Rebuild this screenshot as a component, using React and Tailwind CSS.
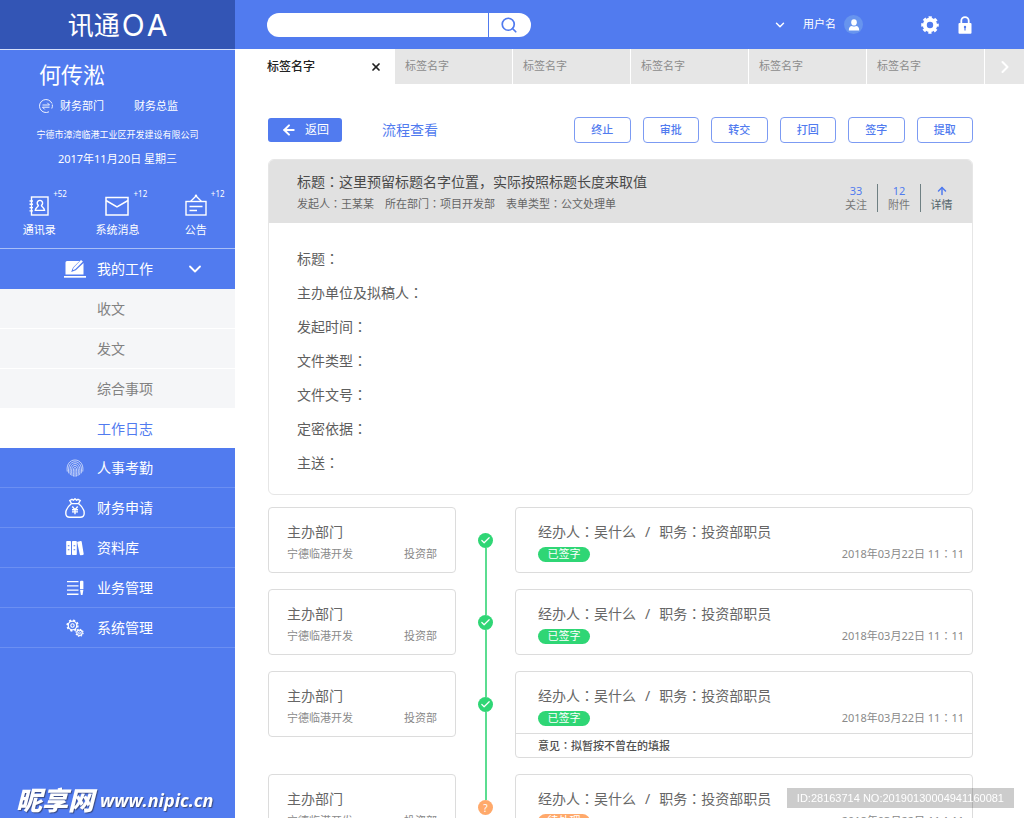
import React from "react";
import { Search, ChevronDown, ChevronRight, ArrowLeft, ArrowUp, X, Check } from "lucide-react";

const shortcuts = [
  { label: "通讯录", count: "+52", Icon: ContactsIcon },
  { label: "系统消息", count: "+12", Icon: MailIcon },
  { label: "公告", count: "+12", Icon: NoticeIcon },
];

const subItems = ["收文", "发文", "综合事项", "工作日志"];

const modules = [
  { label: "人事考勤", Icon: FingerprintIcon },
  { label: "财务申请", Icon: MoneyBagIcon },
  { label: "资料库", Icon: BooksIcon },
  { label: "业务管理", Icon: ListPenIcon },
  { label: "系统管理", Icon: GearsIcon },
];

const actions = ["终止", "审批", "转交", "打回", "签字", "提取"];
const tabs = [1, 2, 3, 4, 5];
const fields = ["标题", "主办单位及拟稿人", "发起时间", "文件类型", "文件文号", "定密依据", "主送"];

const steps = [
  { id: 1, done: true },
  { id: 2, done: true },
  { id: 3, done: true, note: "拟暂按不曾在的填报" },
  { id: 4, done: false },
];

function Colon() {
  return (
    <span lang="zh-TW" className="font-['Noto_Sans_CJK_TC',sans-serif] leading-none">
      ：
    </span>
  );
}

function ContactsIcon() {
  return (
    <svg viewBox="0 0 20 20" className="h-5 w-5" fill="none" stroke="currentColor" strokeWidth="1.4">
      <rect x="2.5" y="1" width="16.5" height="18" />
      <path d="M0.5 5h3.5M0.5 8.3h3.5M0.5 11.6h3.5M0.5 14.9h3.5" />
      <path d="M9.300 9.400a2.700 2.800 0 1 1 3.200 0c0 1.600 2.700 1.700 3 5H6.300c.3-3.300 3-3.400 3-5z" />
    </svg>
  );
}

function MailIcon() {
  return (
    <svg viewBox="0 0 24 20" className="h-5 w-6" fill="none" stroke="currentColor" strokeWidth="1.5">
      <rect x="1" y="1.500" width="22" height="17.500" />
      <path d="M1 4.500l11 6.500L23 4.500" />
    </svg>
  );
}

function NoticeIcon() {
  return (
    <svg viewBox="0 0 22 22" className="h-[22px] w-[22px]" fill="none" stroke="currentColor" strokeWidth="1.4">
      <rect x="1" y="7.500" width="20" height="13.500" />
      <path d="M5.500 7.500L11 2l5.500 5.500M4.500 12.500h13M4.500 16.500h7.500" />
      <circle cx="11" cy="1.800" r="1.200" fill="currentColor" stroke="none" />
    </svg>
  );
}

function LaptopIcon() {
  return (
    <svg viewBox="0 0 22 18" className="h-[18px] w-[22px]" fill="currentColor">
      <path d="M3 1h12.500L9 7.500 7.200 12l4.600-1.700L19.500 3v11.500h-18V2.500Q1.500 1 3 1z" />
      <path d="M17 0l1.900 1.600-7.700 7.700-2.400.9.700-2.400z" />
      <rect x="0" y="16" width="22" height="1.700" />
    </svg>
  );
}

function FingerprintIcon() {
  return (
    <svg viewBox="0 0 18 18" className="size-[18px] opacity-80" fill="none" stroke="currentColor" strokeWidth="0.800" strokeLinecap="round">
      <path d="M1.200 12.200C.2 6 3.500 1 9 1s8.800 5 7.800 11.200" />
      <path d="M2.700 14C1.600 8 4 2.800 9 2.800s7.400 5.200 6.300 11.200" />
      <path d="M4.400 15.500C3.200 9.500 5 4.600 9 4.600s5.800 4.900 4.600 10.900" />
      <path d="M6 16.500c-1-5.500-.2-10 3-10s4 4.500 3 10" />
      <path d="M7.600 17.200c-.6-5-.4-8.800 1.400-8.800s2 3.800 1.400 8.800M9 10.500v6.800" />
    </svg>
  );
}

function MoneyBagIcon() {
  return (
    <svg viewBox="0 0 20 20" className="size-5" fill="none" stroke="currentColor" strokeWidth="1.400">
      <path d="M6.500 5.500C4 7.500.8 11 .8 15.200c0 2.600 1.500 4 4 4h10.400c2.500 0 4-1.400 4-4 0-4.200-3.200-7.700-5.700-9.700" />
      <path d="M6.200 5.600h7.600M6.500 5.500L4.800 2.500 7 1.300l1.500.8L10 .8l1.500 1.300 1.500-.8 2.200 1.200-1.700 3" />
      <path d="M7.300 8.500l2.700 3.200 2.700-3.200M7 11.800h6M7 13.900h6M10 11.700v4.600" />
    </svg>
  );
}

function BooksIcon() {
  return (
    <svg viewBox="0 0 18 16" className="h-4 w-[18px]" fill="currentColor">
      <path fillRule="evenodd" d="M1 1h3.200q.8 0 .8.800v12.400q0 .8-.8.800H1q-.8 0-.8-.8V1.800Q.200 1 1 1zm.8 4.300v1h1.600v-1zm0 4v1h1.600v-1z" />
      <path fillRule="evenodd" d="M6.800 1H10q.8 0 .8.800v12.400q0 .8-.8.800H6.800q-.8 0-.8-.8V1.800q0-.8.800-.8zm.8 4.300v1h1.600v-1zm0 4v1h1.600v-1z" />
      <path d="M11.700 1.800l3.100-.7q.8-.100.900.7l2 12.200q.100.800-.7.900l-2.300.3q-.8.100-.9-.7L11.200 2.600q0-.700.5-.8z" />
    </svg>
  );
}

function ListPenIcon() {
  return (
    <svg viewBox="0 0 18 16" className="h-4 w-[18px]" fill="currentColor">
      <path d="M1 1h11.500v1.300H1zM1 5.200h11.500v1.300H1zM1 9.400h11.500v1.300H1zM1 13.600h11.500v1.300H1z" />
      <path d="M14 1.800q0-1 1-1h1.400q1 0 1 1V9H14zM14 9.800h3.400L16.500 14.900h-1.600z" />
    </svg>
  );
}

function GearsIcon() {
  return (
    <svg viewBox="0 0 18 18" className="size-[18px]" fill="none" stroke="currentColor">
      <circle cx="6.500" cy="6.500" r="4.300" strokeWidth="1.300" />
      <circle cx="6.500" cy="6.500" r="5.400" strokeWidth="1.500" strokeDasharray="2.100 2.140" />
      <circle cx="6.500" cy="6.500" r="1.700" strokeWidth="1.100" />
      <circle cx="13.500" cy="13.800" r="2.700" strokeWidth="1.100" />
      <circle cx="13.500" cy="13.800" r="3.600" strokeWidth="1.200" strokeDasharray="1.400 1.430" />
      <circle cx="13.500" cy="13.800" r="1" strokeWidth="0.900" />
    </svg>
  );
}

function SettingsIcon() {
  return (
    <svg viewBox="0 0 18 18" className="size-[18px]" fill="none" stroke="currentColor">
      <circle cx="9" cy="9" r="5.200" strokeWidth="4" />
      <circle cx="9" cy="9" r="7.700" strokeWidth="2.200" strokeDasharray="3.300 2.747" strokeDashoffset="1.650" />
    </svg>
  );
}

function SwapIcon() {
  return (
    <svg viewBox="0 0 14 14" className="size-3.5" fill="none" stroke="currentColor" strokeWidth="0.900">
      <path d="M13 4.500A6.500 6.500 0 1 0 10 12.800M13.300 5.500a6.500 6.500 0 0 1-.5 4" />
      <path d="M3.500 6h7L8.300 3.800M10.500 8.200h-7l2.200 2.200" />
    </svg>
  );
}

function Header() {
  return (
    <header className="flex h-[49px] shrink-0 bg-[#517bef] text-white">
      <h1 className="flex w-[235px] shrink-0 items-center justify-center gap-0.5 bg-[#3355b5]">
        <span className="text-[26px] leading-6">讯通</span>
        <span className="flex gap-0.5 font-['Inter',sans-serif] text-[30px] leading-6 font-normal">
          <span>O</span>
          <span>A</span>
        </span>
      </h1>
      <div className="flex flex-1 items-center pr-[52px] pl-8">
        <form role="search" className="flex h-6 w-[264px] overflow-hidden rounded-full bg-white" onSubmit={(e) => e.preventDefault()}>
          <input type="search" aria-label="搜索" className="min-w-0 flex-1 px-4 text-xs text-gray-700 outline-none" />
          <button type="submit" aria-label="搜索" className="flex w-[43px] items-center justify-center border-l border-[#517bef] pr-0.5 text-[#517bef]">
            <Search className="size-[18px]" strokeWidth={2.3} />
          </button>
        </form>
        <button type="button" className="ml-auto flex items-center text-[11px]">
          <ChevronDown className="mr-4 size-3.5" strokeWidth={2.5} />
          用户名
          <span className="ml-2 flex size-[19px] items-center justify-center rounded-full bg-[#6794ee]">
            <svg viewBox="0 0 12 12" className="size-3" fill="currentColor">
              <ellipse cx="6" cy="3.400" rx="2.800" ry="3.100" />
              <path d="M.800 11.500Q.800 7.200 4 7q2 1.200 4 0 3.200.2 3.200 4.500z" />
            </svg>
          </span>
        </button>
        <button type="button" aria-label="设置" className="ml-[58px]">
          <SettingsIcon />
        </button>
        <button type="button" aria-label="锁定" className="ml-[19px]">
          <svg viewBox="0 0 14 18" className="h-[18px] w-3.5" fill="none">
            <path d="M3.300 8V4.800a3.700 3.700 0 0 1 7.400 0V8" stroke="currentColor" strokeWidth="1.800" />
            <rect x="0.500" y="7" width="13" height="10.800" rx="1" fill="currentColor" />
            <circle cx="7" cy="11" r="1.200" fill="#517bef" />
            <path d="M7 11v3.500" stroke="#517bef" strokeWidth="1.200" />
          </svg>
        </button>
      </div>
    </header>
  );
}

function Sidebar() {
  return (
    <aside className="flex w-[235px] shrink-0 flex-col border-t border-[#d5dffb] bg-[#517bef] text-white">
      <section className="flex h-[199px] shrink-0 flex-col border-b border-[#a9bff7]">
        <h2 className="pt-2 pl-[39px] text-[22px] leading-8">何传淞</h2>
        <p className="flex items-center pt-1.5 pl-[39px] text-[11px] leading-5">
          <SwapIcon />
          <span className="ml-[7px]">财务部门</span>
          <span className="ml-[30px]">财务总监</span>
        </p>
        <p className="pt-[9px] text-center text-[9px] leading-5">宁德市漳湾临港工业区开发建设有限公司</p>
        <p className="pt-1 text-center text-[11px] leading-5">2017年11月20日 星期三</p>
        <ul className="mt-[21px] grid grid-cols-3">
          {shortcuts.map(({ label, count, Icon }) => (
            <li key={label}>
              <a href="#" className="flex flex-col items-center text-[11px] leading-5">
                <span className="relative flex h-7 items-end pb-0.5">
                  <Icon />
                  <span className="absolute -top-1 left-full pl-1 text-[8px] leading-4">{count}</span>
                </span>
                <span className="pt-0.5">{label}</span>
              </a>
            </li>
          ))}
        </ul>
      </section>
      <nav className="text-sm">
        <button type="button" className="flex h-10 w-full items-center border-b border-[#517bef] pl-16">
          <LaptopIcon />
          <span className="ml-[11px]">我的工作</span>
          <ChevronDown className="ml-8 size-5" strokeWidth={2.2} />
        </button>
        <ul>
          {subItems.map((label) => (
            <li key={label}>
              <a
                href="#"
                className={
                  label === "工作日志"
                    ? "flex h-[39px] items-center bg-white pl-[97px] text-[#517bef]"
                    : "flex h-10 items-center border-b border-white bg-[#f5f6f8] pl-[97px] text-[#828282]"
                }
              >
                {label}
              </a>
            </li>
          ))}
        </ul>
        <ul>
          {modules.map(({ label, Icon }) => (
            <li key={label}>
              <a href="#" className="flex h-10 items-center border-b border-[#6b8ff2] pl-16">
                <span className="flex w-[22px] justify-center">
                  <Icon />
                </span>
                <span className="ml-[11px]">{label}</span>
              </a>
            </li>
          ))}
        </ul>
      </nav>
    </aside>
  );
}

function TabBar() {
  return (
    <div className="flex h-[35px] shrink-0">
      <div className="flex w-40 shrink-0 items-center justify-between pr-[13px] pl-8 text-xs font-medium text-[#222222]">
        <a href="#">标签名字</a>
        <button type="button" aria-label="关闭标签">
          <X className="size-3" strokeWidth={3.5} />
        </button>
      </div>
      <div className="flex flex-1 bg-[#e6e6e6] text-[11px] text-[#8c8c8c]">
        {tabs.map((n) => (
          <a key={n} href="#" className="flex w-[118px] items-center border-r border-white pl-2.5">
            标签名字
          </a>
        ))}
        <button type="button" aria-label="更多标签" className="flex flex-1 items-center justify-center text-white">
          <ChevronRight className="size-5" strokeWidth={2.5} />
        </button>
      </div>
    </div>
  );
}

function Toolbar() {
  return (
    <div className="flex h-[26px] items-center">
      <button type="button" className="flex h-6 w-[74px] items-center justify-center gap-2 rounded-[3px] bg-[#517bef] text-xs text-white">
        <ArrowLeft className="size-4" strokeWidth={3} />
        返回
      </button>
      <h2 className="ml-10 text-sm text-[#517bef]">流程查看</h2>
      <div className="ml-auto grid w-[399px] grid-cols-6 gap-3">
        {actions.map((label) => (
          <button key={label} type="button" className="h-[26px] rounded border border-[#7c9bf3] text-[11px] font-medium text-[#517bef]">
            {label}
          </button>
        ))}
      </div>
    </div>
  );
}

function Document() {
  return (
    <section className="mt-4 overflow-hidden rounded-md border border-[#e6e6e6]">
      <header className="flex h-[63px] items-center bg-[#e1e1e1] pr-2.5 pl-7">
        <div>
          <h3 className="text-sm leading-6 text-[#4a4a4a]">
            标题<Colon />这里预留标题名字位置，实际按照标题长度来取值
          </h3>
          <p className="flex gap-[11px] text-[11px] leading-5 text-[#666666]">
            <span>发起人<Colon />王某某</span>
            <span>所在部门<Colon />项目开发部</span>
            <span>表单类型<Colon />公文处理单</span>
          </p>
        </div>
        <div className="ml-auto flex divide-x divide-[#6f8083] pt-3 text-center text-[11px] leading-3.5 text-[#777777]">
          <a href="#" className="w-[43px]">
            <span className="block text-[#517bef]">33</span>关注
          </a>
          <a href="#" className="w-[43px]">
            <span className="block text-[#517bef]">12</span>附件
          </a>
          <a href="#" className="w-[41px] text-[#52646a]">
            <span className="flex h-3.5 items-center justify-center text-[#517bef]">
              <ArrowUp className="size-3" strokeWidth={3} />
            </span>
            详情
          </a>
        </div>
      </header>
      <dl className="pt-[19px] pb-3.5 pl-7 text-sm text-[#5e5e5e]">
        {fields.map((name) => (
          <dt key={name} className="h-[34px] leading-[34px]">
            {name}
            <Colon />
          </dt>
        ))}
      </dl>
    </section>
  );
}

function Step({ step, first, last }) {
  return (
    <li className="flex text-[#666666]">
      <div className="w-[188px] shrink-0 pb-4">
        <div className="h-[66px] rounded border border-[#dcdcdc] pt-3.5 pr-[18px] pl-[18px]">
          <h4 className="text-sm leading-5">主办部门</h4>
          <p className="flex justify-between text-[11px] leading-6 text-[#8a8a8a]">
            <span>宁德临港开发</span>
            <span>投资部</span>
          </p>
        </div>
      </div>
      <div className="flex w-[59px] shrink-0 flex-col items-center">
        <span className={first ? "h-[26px]" : "h-[26px] w-0.5 bg-[#5bdd90]"} />
        {step.done ? (
          <span className="flex size-[15px] items-center justify-center rounded-full bg-[#2fd675] text-white">
            <Check className="size-[11px]" strokeWidth={2.6} />
          </span>
        ) : (
          <span className="flex size-[15px] items-center justify-center rounded-full bg-[#ffa96b] text-[10px] leading-none text-white">?</span>
        )}
        {!last && <span className="w-0.5 flex-1 bg-[#5bdd90]" />}
      </div>
      <div className="flex-1 pb-4">
        <div className="rounded border border-[#dcdcdc]">
          <div className={step.note ? "h-[61px] pt-3.5 pr-2 pl-[22px]" : "h-16 pt-3.5 pr-2 pl-[22px]"}>
            <h4 className="flex h-5 gap-[9px] text-sm leading-5">
              <span>经办人<Colon />吴什么</span>
              <span>/</span>
              <span>职务<Colon />投资部职员</span>
            </h4>
            <p className="flex h-6 items-center justify-between text-[11px] leading-6">
              <span
                className={
                  step.done
                    ? "flex h-[15px] w-[52px] items-center justify-center rounded-full bg-[#2fd675] text-white"
                    : "flex h-[15px] w-[52px] items-center justify-center rounded-full bg-[#ffa96b] text-white"
                }
              >
                {step.done ? "已签字" : "待处理"}
              </span>
              <time className="text-[#8a8a8a]">2018年03月22日 11<Colon />11</time>
            </p>
          </div>
          {step.note && (
            <p className="h-6 border-t border-[#dcdcdc] pl-[22px] text-[11px] leading-6 font-medium text-[#505050]">
              意见<Colon />{step.note}
            </p>
          )}
        </div>
      </div>
    </li>
  );
}

export default function App() {
  return (
    <div lang="zh-CN" className="flex h-screen flex-col overflow-hidden bg-white font-['Noto_Sans','Noto_Sans_CJK_SC',sans-serif]">
      <Header />
      <div className="flex min-h-0 flex-1">
        <Sidebar />
        <div className="flex min-w-0 flex-1 flex-col">
          <TabBar />
          <main className="flex-1 overflow-y-auto pt-[33px] pr-[51px] pl-[33px] [scrollbar-width:none]">
            <Toolbar />
            <Document />
            <ol className="mt-3">
              {steps.map((step, i) => (
                <Step key={step.id} step={step} first={i === 0} last={i === steps.length - 1} />
              ))}
            </ol>
          </main>
        </div>
      </div>
      <div className="fixed bottom-1.5 left-4 flex items-center gap-1.5 text-white italic [text-shadow:1px_1px_1px_#3a4a80]">
        <span className="text-[26px] leading-6 font-black">昵享网</span>
        <span className="font-['Open_Sans',sans-serif] text-lg leading-6 font-bold">www.nipic.cn</span>
      </div>
      <div className="fixed right-2.5 bottom-2.5 bg-black/20 px-2.5 font-['Liberation_Sans',sans-serif] text-[11px] leading-5 text-white">
        ID:28163714 NO:20190130004941160081
      </div>
    </div>
  );
}
